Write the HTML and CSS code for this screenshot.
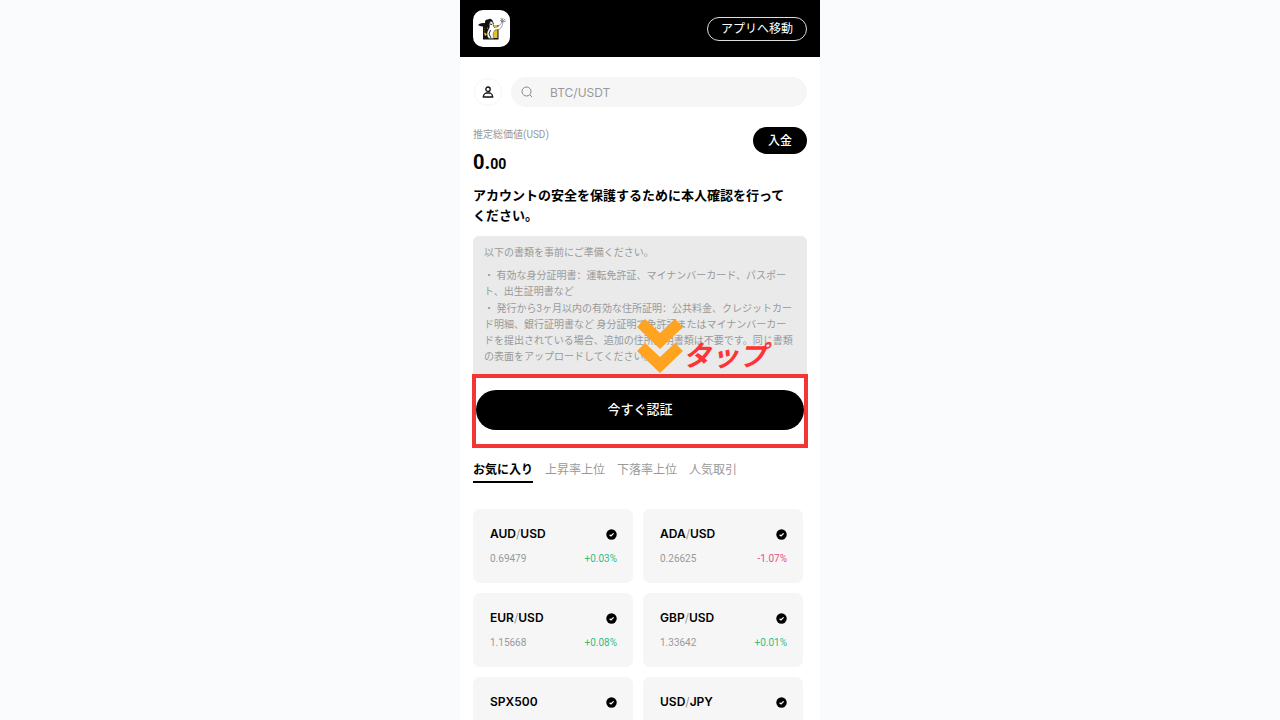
FILE: index.html
```html
<!DOCTYPE html>
<html lang="ja">
<head>
<meta charset="utf-8">
<meta name="viewport" content="width=device-width, initial-scale=1">
<title>本人確認</title>
<link rel="stylesheet" href="styles.css">
</head>
<body>
<svg width="0" height="0" class="defs" aria-hidden="true">
  <symbol id="check" viewBox="0 0 11 11">
    <circle cx="5.500" cy="5.500" r="5.200" fill="#000"/>
    <path d="M3.600 5.700 5 6.900 7.600 4.400" fill="none" stroke="#fff" stroke-width="1.300"/>
  </symbol>
</svg>
<div class="phone">
  <header class="topbar">
    <a class="logo" href="#" aria-label="ホーム">
      <svg viewBox="0 0 37 37" aria-hidden="true">
        <path fill="#111" d="M10 15h15.500v14.500H10z"/>
        <path fill="#e5c12c" d="M11 16h4v3h-4zM11 20h2v2h-2zM11 23l3-2 1 3-3 2zM20.500 15h4v4h-4zM20 20h4.500v8H20z"/>
        <path fill="#111" d="M5 15c2-2 5-2 7-2 0-3 1-4 3-3.500 2-1.500 4-.5 5 2l1 3c-3-1-5-.5-6 2-1 3-1 5-1 8l-3-3c1-2 0-3 0-5-2 0-4 0-6-1.500z"/>
        <path fill="#fff" stroke="#444" stroke-width=".5" d="M17 12c2-1 3 0 3 2.500l1 3c3 0 5-1 7-4l.5-2 1.500.5-1 4c-1 3-4 4-7 4l-1.500 2.500c-1 2 0 4 0 6H16c-3-3-2-7 0-10 1-2 0-4 1-6.500z"/>
        <path fill="none" stroke="#222" stroke-width="1" d="M17.500 20l-1.500 4 2 4M17 14l2 .5"/>
        <path fill="none" stroke="#777" stroke-width=".8" d="M29 12l-2-2M29 12l-1-4M29 12l1-4M29 12l3-3M29 12l4-1"/>
      </svg>
    </a>
    <button class="open-app" type="button">アプリへ移動</button>
  </header>

  <main class="content">
    <div class="search-row">
      <button class="profile" type="button" aria-label="プロフィール">
        <svg viewBox="0 0 12 12" fill="none" stroke="#111" stroke-width="1.300" stroke-linejoin="round" aria-hidden="true">
          <circle cx="6" cy="3.200" r="2.200"/>
          <path d="M3.800 7h4.400q2.300 1 2.600 4H1.200q.3-3 2.600-4z"/>
        </svg>
      </button>
      <label class="search">
        <svg viewBox="0 0 12 12" fill="none" stroke="#7d8793" stroke-width="1" aria-hidden="true">
          <circle cx="5.500" cy="5.500" r="4.500"/><path d="M8.800 8.800 11.200 11.200"/>
        </svg>
        <input type="text" placeholder="BTC/USDT" aria-label="検索">
      </label>
    </div>

    <section class="balance">
      <div>
        <p class="balance-label">推定総価値(USD)</p>
        <p class="amount">0.<span class="cents">00</span></p>
      </div>
      <button class="deposit" type="button">入金</button>
    </section>

    <h1 class="title">アカウントの安全を保護するために本人確認を行って<br>ください。</h1>

    <section class="notice">
      <p class="lead">以下の書類を事前にご準備ください。</p>
      <p>・ 有効な身分証明書<span class="colon" lang="zh-CN">：</span>運転免許証、マイナンバーカード、パスポー<br>ト、出生証明書など</p>
      <p>・ 発行から3ヶ月以内の有効な住所証明<span class="colon" lang="zh-CN">：</span>公共料金、クレジットカー<br>ド明細、銀行証明書など 身分証明で免許証またはマイナンバーカー<br>ドを提出されている場合、追加の住所証明書類は不要です。同じ書類<br>の表面をアップロードしてください。</p>
    </section>

    <div class="highlight">
      <button class="verify" type="button">今すぐ認証</button>
      <div class="hint">
        <svg viewBox="0 0 46 54" aria-hidden="true">
          <path fill="#ffa321" d="M0 8 8 0 23 14 38 0 46 8 23 30zM0 32 8 24 23 38 38 24 46 32 23 54z"/>
        </svg>
        <span>タップ</span>
      </div>
    </div>

    <nav class="tabs">
      <a class="tab active" href="#">お気に入り</a>
      <a class="tab" href="#">上昇率上位</a>
      <a class="tab" href="#">下落率上位</a>
      <a class="tab" href="#">人気取引</a>
    </nav>

    <section class="pairs">
      <article class="card">
        <div class="line"><h2 class="pair">AUD<i>/</i>USD</h2><svg class="check" aria-hidden="true"><use href="#check"/></svg></div>
        <div class="line quote"><span>0.69479</span><span class="up">+0.03%</span></div>
      </article>
      <article class="card">
        <div class="line"><h2 class="pair">ADA<i>/</i>USD</h2><svg class="check" aria-hidden="true"><use href="#check"/></svg></div>
        <div class="line quote"><span>0.26625</span><span class="down">-1.07%</span></div>
      </article>
      <article class="card">
        <div class="line"><h2 class="pair">EUR<i>/</i>USD</h2><svg class="check" aria-hidden="true"><use href="#check"/></svg></div>
        <div class="line quote"><span>1.15668</span><span class="up">+0.08%</span></div>
      </article>
      <article class="card">
        <div class="line"><h2 class="pair">GBP<i>/</i>USD</h2><svg class="check" aria-hidden="true"><use href="#check"/></svg></div>
        <div class="line quote"><span>1.33642</span><span class="up">+0.01%</span></div>
      </article>
      <article class="card">
        <div class="line"><h2 class="pair">SPX500</h2><svg class="check" aria-hidden="true"><use href="#check"/></svg></div>
      </article>
      <article class="card">
        <div class="line"><h2 class="pair">USD<i>/</i>JPY</h2><svg class="check" aria-hidden="true"><use href="#check"/></svg></div>
      </article>
    </section>
  </main>
</div>
</body>
</html>
```
FILE: styles.css
```css
* { box-sizing: border-box; }
body {
  margin: 0;
  background: #fafbfd;
  color: #000;
  font-family: Roboto, "Noto Sans CJK JP", sans-serif;
  font-size: 12px;
}
h1, h2, p { margin: 0; }
button, input { font: inherit; }
button { border: 0; padding: 0; }
a { color: inherit; text-decoration: none; }
.defs { position: absolute; }

.phone {
  max-width: 360px;
  height: 100vh;
  margin: 0 auto;
  background: #fff;
  overflow: hidden;
}
.topbar {
  display: flex;
  align-items: center;
  justify-content: space-between;
  padding: 10px 13px;
  background: #000;
}
.logo {
  width: 37px;
  height: 37px;
  border-radius: 10px;
  background: #fff;
}
.logo svg { display: block; }
.open-app {
  padding: 0 13px;
  border: 1px solid #ddd;
  border-radius: 12px;
  background: #000;
  color: #fff;
  line-height: 22px;
}

.content { padding: 20px 13px 0; }
.search-row {
  display: flex;
  align-items: center;
  gap: 9px;
  padding-left: 1px;
}
.profile {
  display: grid;
  place-items: center;
  width: 28px;
  height: 28px;
  border: 1px solid #f5f5f5;
  border-radius: 50%;
  background: #fff;
}
.profile svg { width: 12px; }
.search {
  display: flex;
  flex: 1;
  align-items: center;
  gap: 17px;
  height: 30px;
  padding: 0 10px;
  border-radius: 15px;
  background: #f6f6f6;
}
.search svg { width: 12px; }
.search input {
  flex: 1;
  min-width: 0;
  padding: 0;
  border: 0;
  outline: 0;
  background: none;
  font-family: Inter, sans-serif;
}
.search input::placeholder { color: #999; }

.balance {
  display: flex;
  align-items: flex-start;
  justify-content: space-between;
  padding-top: 20px;
}
.balance-label {
  color: #999;
  font-size: 10px;
  line-height: 16px;
}
.amount {
  padding-top: 6px;
  font-size: 20px;
  font-weight: 700;
  line-height: 26px;
}
.cents { font-size: 14px; }
.deposit {
  padding: 2px 15px 0;
  border-radius: 14px;
  background: #000;
  color: #fff;
  font-weight: 500;
  line-height: 25px;
}
.title {
  padding: 9px 0 10px;
  font-size: 13px;
  font-weight: 700;
  line-height: 20px;
}
.notice {
  padding: 9px 11px;
  border-radius: 6px 6px 0 0;
  background: #eaeaea;
  color: #999;
  font-size: 10px;
  line-height: 16px;
  white-space: nowrap;
}
.lead { padding-bottom: 6px; }
.colon { font-family: "Noto Sans CJK SC", sans-serif; }

.highlight {
  position: relative;
  margin: 0 -1px;
  padding: 12px 0 14px;
  border: 4px solid #f23535;
}
.verify {
  display: block;
  width: 100%;
  border-radius: 20px;
  background: #000;
  color: #fff;
  font-size: 13px;
  font-weight: 500;
  line-height: 40px;
}
.hint {
  position: absolute;
  left: 49%;
  bottom: 100%;
  display: flex;
  align-items: flex-end;
  padding-bottom: 5px;
  color: #f33;
  font-size: 28px;
  font-style: italic;
  font-weight: 700;
  line-height: 32px;
}
.hint svg { width: 46px; }

.tabs {
  display: flex;
  gap: 12px;
  padding-top: 11px;
  color: #999;
  line-height: 22px;
}
.tab { border-bottom: 2px solid transparent; }
.active {
  border-color: #000;
  color: #000;
  font-weight: 700;
}
.pairs {
  display: grid;
  grid-template-columns: 1fr 1fr;
  grid-auto-rows: 74px;
  gap: 10px;
  padding: 26px 4px 0 0;
}
.card {
  padding: 16px 16px 0 17px;
  border-radius: 7px;
  background: #f6f6f6;
}
.line {
  display: flex;
  align-items: center;
  justify-content: space-between;
  line-height: 18px;
}
.pair {
  font-family: Inter, sans-serif;
  font-size: 12px;
  font-weight: 600;
}
.pair i {
  color: #999;
  font-style: normal;
  font-weight: 400;
}
.check {
  width: 11px;
  height: 11px;
}
.quote {
  padding-top: 7px;
  color: #999;
  font-size: 10px;
}
.up { color: #32bd84; }
.down { color: #e94e83; }
```
